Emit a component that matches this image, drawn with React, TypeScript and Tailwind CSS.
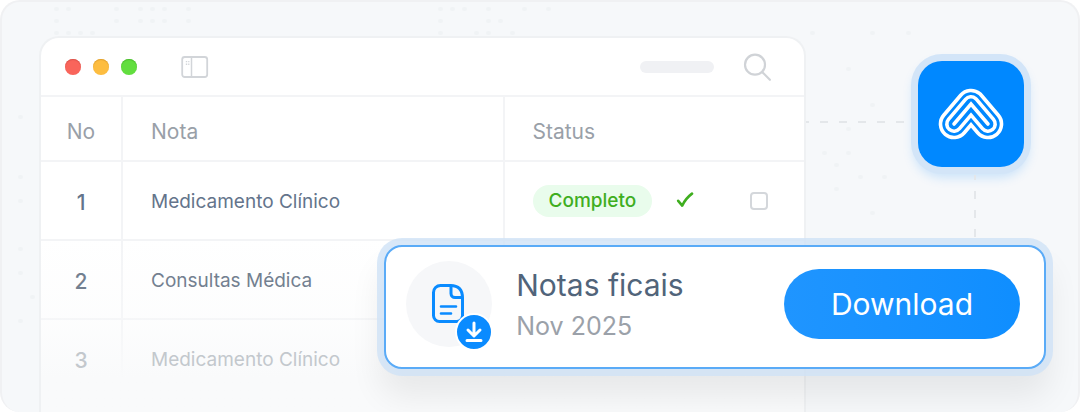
import React from "react";

const rows = [
  { no: 1, nota: "Medicamento Clínico", done: true, tone: "text-[#64748b]" },
  { no: 2, nota: "Consultas Médica", done: false, tone: "text-[#738090]" },
  { no: 3, nota: "Medicamento Clínico", done: false, tone: "text-[#c3c8cd]" },
];

// faint dots of the backdrop, on a 12px grid: [column, row]
const dots = [
  [4, 0], [5, 0], [9, 0], [11, 0], [12, 0], [13, 0], [15, 0],
  [4, 1], [9, 1], [11, 1], [12, 1], [13, 1], [15, 1],
  [4, 2], [5, 2], [6, 2], [7, 2],
  [36, 0], [37, 0], [38, 0], [40, 0], [43, 0], [45, 0],
  [36, 1], [40, 1], [41, 1], [36, 2], [39, 2], [40, 2], [42, 2],
  [67, 2], [72, 2], [75, 2], [70, 5], [72, 8], [70, 10], [68, 12],
  [70, 12], [69, 13], [71, 14], [73, 14], [69, 15], [72, 17],
  [1, 9], [1, 14], [1, 16], [1, 20], [1, 22], [2, 24], [1, 26],
];

const Backdrop = () => (
  <svg
    className="absolute inset-0 h-full w-full"
    fill="#64748b"
    fillOpacity="0.04"
    aria-hidden="true"
  >
    {dots.map(([x, y], i) => (
      <rect key={i} x={x * 12 + 4} y={y * 12 + 5} width="5" height="4" rx="2" />
    ))}
  </svg>
);

const SidebarIcon = () => (
  <svg width="28" height="24" viewBox="0 0 28 24" fill="none" stroke="#d2d5d9">
    <rect x="1.2" y="2" width="25" height="20" rx="2.5" strokeWidth="1.8" />
    <path d="M10.5 2v20" strokeWidth="1.5" />
    <path d="M4.8 6.6h1.4M7.2 6.6h1.2M4.8 9.2h1.4M7.2 9.2h1.2" strokeWidth="1.4" />
  </svg>
);

const SearchIcon = () => (
  <svg
    width="30"
    height="30"
    viewBox="0 0 30 30"
    fill="none"
    stroke="#d0d3d7"
    strokeWidth="2.2"
    strokeLinecap="round"
  >
    <circle cx="13" cy="12.7" r="10" />
    <path d="M20.400 20.200l7.500 7.600" />
  </svg>
);

const CheckIcon = () => (
  <svg
    width="18"
    height="18"
    viewBox="0 0 18 18"
    fill="none"
    stroke="#3fae1f"
    strokeWidth="2.6"
    strokeLinecap="round"
    strokeLinejoin="round"
  >
    <path d="M2.2 8.8L6.2 13.6Q9.5 6.5 16 1.6" />
  </svg>
);

const Logo = () => (
  <svg width="68" height="54" viewBox="0 0 68 54" fill="none" aria-hidden="true">
    <g strokeLinecap="round" strokeLinejoin="round">
      <path d="M17 37L34 17L51 37" stroke="#fff" strokeWidth="30.6" />
      <path d="M17 37L34 17L51 37" stroke="#0088ff" strokeWidth="23.4" />
      <path d="M17 37L34 17L51 37" stroke="#fff" strokeWidth="18" />
      <path d="M17 37L34 17L51 37" stroke="#0088ff" strokeWidth="10.8" />
    </g>
    <path
      d="M17 37L34 17L51 37"
      stroke="#fff"
      strokeWidth="3.6"
      strokeLinecap="round"
    />
  </svg>
);

const FileIcon = () => (
  <svg
    width="34"
    height="40"
    viewBox="0 0 34 40"
    fill="none"
    stroke="#0a8bff"
    strokeWidth="3"
    strokeLinecap="round"
    strokeLinejoin="round"
  >
    <path d="M18.5 1.5H8.5a7 7 0 0 0-7 7v23a6 6 0 0 0 6 6h17a6 6 0 0 0 6-6V14Q30.5 1.5 18.5 1.5z" />
    <path d="M19 2v7.5a4 4 0 0 0 4 4h7" />
    <path d="M9 22.5h15M9 29.5h10" strokeWidth="2.6" />
  </svg>
);

const DownloadIcon = () => (
  <svg
    width="20"
    height="22"
    viewBox="0 0 20 22"
    fill="none"
    stroke="#fff"
    strokeWidth="3"
    strokeLinecap="round"
    strokeLinejoin="round"
  >
    <path d="M10 2v12M4 9l6 6 6-6M3 19.5h14" />
  </svg>
);

const Window = () => (
  <section className="relative min-w-0 flex-1 overflow-hidden rounded-t-[20px] border-2 border-b-0 border-[#eff1f3] bg-white">
    <div className="flex h-[57px] items-center pr-8 pl-6">
      <div className="flex gap-3">
        <span className="h-4 w-4 rounded-full bg-[#f9655b] shadow-[inset_0_1px_1px_#d9534b]" />
        <span className="h-4 w-4 rounded-full bg-[#fdbd40] shadow-[inset_0_1px_1px_#dfa02f]" />
        <span className="h-4 w-4 rounded-full bg-[#62de3f] shadow-[inset_0_1px_1px_#4cbb2f]" />
      </div>
      <button className="ml-11" aria-label="Sidebar">
        <SidebarIcon />
      </button>
      <div className="ml-auto h-3 w-[74px] rounded-full bg-[#f0f1f4]" />
      <button className="ml-7" aria-label="Search">
        <SearchIcon />
      </button>
    </div>
    <div className="absolute inset-x-0 bottom-0 h-44 bg-linear-to-b from-[#f9fafb]/0 via-[#f9fafb]/40 via-50% to-[#f9fafb] to-81%" />
    <table className="w-full table-fixed border-collapse text-left text-[19px]">
      <thead>
        <tr className="h-[65px] border-y-2 border-[#f3f4f6] text-[21px] text-[#99a0a8]">
          <th className="w-[81px] border-r-2 border-[#f3f4f6] p-0 pt-1.5 text-center font-normal">
            No
          </th>
          <th className="w-1/2 border-r-2 border-[#f3f4f6] p-0 pt-1.5 pl-7 font-normal">
            Nota
          </th>
          <th className="p-0 pt-1.5 pl-7 font-normal">Status</th>
        </tr>
      </thead>
      <tbody>
        {rows.map(({ no, nota, done, tone }) => (
          <tr key={no} className={`h-[79px] border-b-2 border-[#f3f4f6] ${tone}`}>
            <td className="border-r-2 border-[#f3f4f6] p-0 pt-1 text-center text-[21px] font-medium">
              <span className="relative">{no}</span>
            </td>
            <td className="border-r-2 border-[#f3f4f6] p-0 pt-1 pl-7">
              <span className="relative">{nota}</span>
            </td>
            <td className="p-0 pr-9 pl-7">
              {done && (
                <div className="flex items-center">
                  <span className="rounded-full bg-[#e9fcec] px-4 leading-8 font-medium text-[#3fae1f]">
                    Completo
                  </span>
                  <span className="ml-6">
                    <CheckIcon />
                  </span>
                  <input
                    type="checkbox"
                    aria-label={nota}
                    className="ml-auto h-[18px] w-[18px] appearance-none rounded-sm border-2 border-[#d4d7db]"
                  />
                </div>
              )}
            </td>
          </tr>
        ))}
      </tbody>
    </table>
  </section>
);

const AppBadge = () => (
  <aside className="w-[272px] shrink-0 pt-[25px] pr-[54px]">
    <div className="flex items-center">
      <svg className="mt-4 mr-2 h-[2px] w-0 flex-1" aria-hidden="true">
        <path d="M0 1H400" stroke="#e4e7ea" strokeWidth="2" strokeDasharray="8 11" strokeDashoffset="5" />
      </svg>
      <div className="flex h-[106px] w-[106px] items-center justify-center rounded-3xl bg-[#0088ff] shadow-[0_0_0_7px_#d3e5f8,0_6px_12px_4px_#0088ff33]">
        <Logo />
      </div>
    </div>
    <svg className="mt-2 mr-12 ml-auto h-[66px] w-[2px]" aria-hidden="true">
      <path d="M1 0V66" stroke="#e4e7ea" strokeWidth="2" strokeDasharray="8 11" strokeDashoffset="3" />
    </svg>
  </aside>
);

const DownloadCard = () => (
  <div className="absolute top-[243px] right-8 flex w-[61.5%] items-center rounded-[18px] border-2 border-[#5aabf7] bg-white pt-[14px] pr-6 pb-5 pl-5 shadow-[0_0_0_7px_#cfe2f6cc,0_24px_32px_4px_#00000012]">
    <div className="relative flex h-[86px] w-[86px] shrink-0 items-center justify-center rounded-full bg-[#f6f7f9]">
      <FileIcon />
      <span className="absolute -right-px -bottom-1 flex h-[38px] w-[38px] items-center justify-center rounded-full border-2 border-white bg-[#0a8bff]">
        <DownloadIcon />
      </span>
    </div>
    <div className="ml-6 flex-1 pt-1">
      <h2 className="text-[30px] leading-10 text-[#51647a]">Notas ficais</h2>
      <p className="text-[25px] leading-[42px] text-[#9ba1a9]">Nov 2025</p>
    </div>
    <button className="h-[70px] w-[236px] rounded-full bg-linear-to-r from-[#1f95ff] to-[#0f8eff] text-[30px] text-white">
      Download
    </button>
  </div>
);

export default function App() {
  return (
    <main className="relative flex min-h-screen flex-col overflow-hidden rounded-[20px] border-2 border-b-0 border-[#f0f1f3] bg-[#f6f8fa] font-[Inter,sans-serif]">
      <Backdrop />
      <div className="relative flex flex-1 pt-[34px] pl-[37px]">
        <Window />
        <AppBadge />
      </div>
      <DownloadCard />
    </main>
  );
}
